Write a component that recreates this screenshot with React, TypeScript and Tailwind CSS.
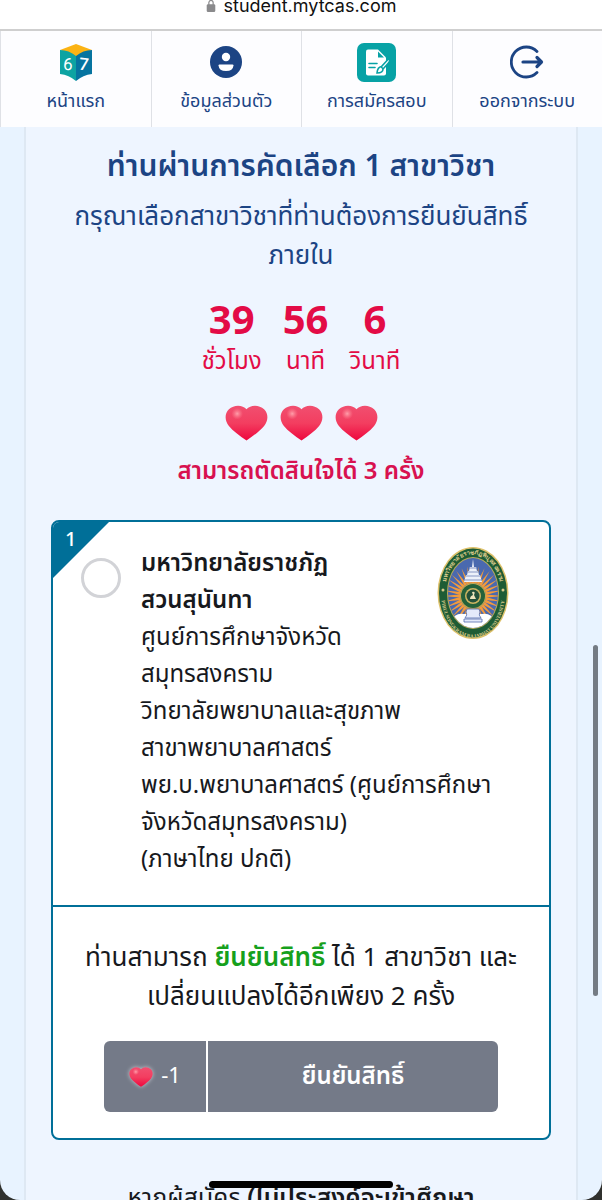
import React from 'react';

const FONT = "font-['Noto_Sans_Thai','Noto_Sans','Liberation_Sans',sans-serif]";

interface NavItem {
  label: string;
  href: string;
  icon: React.ReactNode;
}

const BookIcon = () => (
  <svg viewBox="0 0 34 38" className="w-[34px] h-[38px]" aria-hidden="true">
    <path d="M1 7 L17 1 L33 7 L17 14 Z" fill="#fbb314" />
    <path d="M1 7 Q10 7 17 13 V38 Q10 32 1 31 Z" fill="#0da3a2" />
    <path d="M33 7 Q24 7 17 13 V38 Q24 32 33 31 Z" fill="#0674a0" />
    <text x="9" y="27" textAnchor="middle" fontSize="17" fill="#fff" fontFamily="Roboto" transform="rotate(4 9 21)">6</text>
    <text x="25" y="27" textAnchor="middle" fontSize="17" fill="#fff" fontFamily="Roboto" fontWeight="500" transform="rotate(6 25 21)">7</text>
  </svg>
);

const ProfileIcon = () => (
  <svg viewBox="0 0 34 34" className="w-[34px] h-[34px]" aria-hidden="true">
    <circle cx="17" cy="17" r="16" fill="#1c4484" />
    <circle cx="17" cy="12" r="4.2" fill="#fff" />
    <path d="M9.5 20.5 Q9.5 19.5 10.5 19.5 H23.5 Q24.5 19.5 24.5 20.5 Q24 26 17 26 Q10 26 9.5 20.5 Z" fill="#fff" />
  </svg>
);

const ApplyIcon = () => (
  <svg viewBox="0 0 39 39" className="w-[39px] h-[39px]" aria-hidden="true">
    <rect width="39" height="39" rx="7" fill="#07a2a5" />
    <path d="M11 6.5 H21 L29 14.5 V30.5 Q29 32.5 27 32.5 H11 Q9 32.5 9 30.5 V8.5 Q9 6.5 11 6.5 Z" fill="#fff" />
    <path d="M21 8.5 V14.5 H27" fill="#07a2a5" />
    <path d="M12 20.5 H20 M12 24.5 H18" stroke="#07a2a5" strokeWidth="1.6" strokeLinecap="round" />
    <path d="M32.5 16 Q33.5 18 31 20.5 L26 26 Q26 30 20 30 Q20.5 24 24.5 23.5 L30 17.5 Q31.5 16 32.5 16 Z" fill="#fff" stroke="#07a2a5" strokeWidth="1.6" />
    <path d="M24 23.8 L26 25.8" stroke="#07a2a5" strokeWidth="1.4" />
  </svg>
);

const LogoutIcon = () => (
  <svg viewBox="0 0 34 34" className="w-[34px] h-[34px]" fill="none" stroke="#1c4484" strokeWidth="2.8" strokeLinecap="round" strokeLinejoin="round" aria-hidden="true">
    <path d="M27 6.5 A15 15 0 1 0 27 27.5" />
    <path d="M13 17 H31 M27 12.5 L31.5 17 L27 21.5" strokeWidth="3.2" />
  </svg>
);

const Heart = ({ className }: { className: string }) => (
  <svg viewBox="0 0 44 36" className={className} aria-hidden="true">
    <defs>
      <linearGradient id="heartFill" x1="0" y1="0" x2="0" y2="1">
        <stop offset="0" stopColor="#f14f70" />
        <stop offset="0.5" stopColor="#f33e60" />
        <stop offset="1" stopColor="#ee063d" />
      </linearGradient>
      <radialGradient id="heartShine">
        <stop offset="0" stopColor="#ff9fab" />
        <stop offset="1" stopColor="#ff7e8f" stopOpacity="0" />
      </radialGradient>
    </defs>
    <path d="M22 4 C18 -1 9 -1 4 4 C-1 9 0 16 4 21 C8 26 15 31 22 36 C29 31 36 26 40 21 C44 16 45 9 40 4 C35 -1 26 -1 22 4 Z" fill="url(#heartFill)" />
    <circle cx="12.5" cy="8.5" r="6" fill="url(#heartShine)" />
  </svg>
);

const RAYS = Array.from({ length: 32 }, (_, i) => i * 11.25);

const UniversitySeal = () => (
  <svg viewBox="0 0 72 94" className="w-[72px] h-[94px] shrink-0" role="img" aria-label="ตรามหาวิทยาลัย">
    <defs>
      <path id="sealTop" d="M8 52 C6 -6 66 -6 64 52" />
      <path id="sealBottom" d="M4 46 C5 107 67 107 68 46" />
      <clipPath id="sealInner">
        <ellipse cx="36" cy="47" rx="25" ry="35" />
      </clipPath>
    </defs>
    <ellipse cx="36" cy="47" rx="35.5" ry="46" fill="#ddc16a" />
    <ellipse cx="36" cy="47" rx="34" ry="44.5" fill="#1e5c35" />
    <ellipse cx="36" cy="47" rx="26" ry="36" fill="#b9ab5c" />
    <ellipse cx="36" cy="47" rx="25" ry="35" fill="#4a69af" />
    <g clipPath="url(#sealInner)">
      {RAYS.map((angle) => (
        <path key={angle} d="M34.5 37 L36 20 L37.5 37 Z" fill="#f29a3c" transform={`rotate(${angle} 36 50)`} />
      ))}
      <path d="M10 78 Q18 66 27 68 H45 Q54 66 62 78 V84 H10 Z" fill="#fff" />
    </g>
    <path d="M36 13 L37 21 H39 L40 25 H41 L42 29 H43 L45 36 H27 L29 29 H30 L31 25 H32 L33 21 H35 Z" fill="#edf1fa" />
    <path d="M32 22 H40 M31 26 H41 M29 30 H43 M27 34 H45" stroke="#8796c4" strokeWidth="1" />
    <circle cx="36" cy="50" r="13" fill="#c9ad4c" />
    <circle cx="36" cy="50" r="12" fill="#24613b" />
    <circle cx="36" cy="50" r="8" fill="#ccb562" />
    <circle cx="36" cy="50" r="6.5" fill="#24513a" />
    <path d="M35 46 Q39 45 37 49 L39 53 H33 Q33 50 36 49 Z" fill="#eee4bd" />
    <path d="M30 63 H42 L43 66 Q41 69 44 72 H28 Q31 69 29 66 Z M27 73 H45 V76 H27 Z" fill="#e4eafa" stroke="#526bac" strokeWidth="0.8" />
    <g fill="#d8c98a" fontFamily="Liberation Serif, serif" fontWeight="700">
      <text textAnchor="middle" fontSize="6">
        <textPath href="#sealTop" startOffset="50%">มหาวิทยาลัยราชภัฏพิบูลสงคราม</textPath>
      </text>
      <text textAnchor="middle" fontSize="5">
        <textPath href="#sealBottom" startOffset="50%">PIBULSONGKRAM RAJABHAT UNIVERSITY</textPath>
      </text>
      <circle cx="6" cy="44" r="1.5" />
      <circle cx="66" cy="44" r="1.5" />
    </g>
  </svg>
);

const navItems: NavItem[] = [
  { label: 'หน้าแรก', href: '#home', icon: <BookIcon /> },
  { label: 'ข้อมูลส่วนตัว', href: '#profile', icon: <ProfileIcon /> },
  { label: 'การสมัครสอบ', href: '#apply', icon: <ApplyIcon /> },
  { label: 'ออกจากระบบ', href: '#logout', icon: <LogoutIcon /> },
];

const countdown = [
  { value: '39', unit: 'ชั่วโมง' },
  { value: '56', unit: 'นาที' },
  { value: '6', unit: 'วินาที' },
];

const programLines = [
  'ศูนย์การศึกษาจังหวัด',
  'สมุทรสงคราม',
  'วิทยาลัยพยาบาลและสุขภาพ',
  'สาขาพยาบาลศาสตร์',
  'พย.บ.พยาบาลศาสตร์ (ศูนย์การศึกษา',
  'จังหวัดสมุทรสงคราม)',
  '(ภาษาไทย ปกติ)',
];

const Header = () => (
  <header className="shrink-0">
    <div className="h-[31px] bg-white border-b-2 border-[#cfcfcf] flex items-start justify-center gap-2 overflow-hidden">
      <svg viewBox="0 0 10 14" className="w-[10px] h-3" aria-hidden="true">
        <path d="M2.5 6 V3 a2.5 2.5 0 0 1 5 0 V6" fill="none" stroke="#8a8a8c" strokeWidth="1.4" />
        <rect y="5" width="10" height="9" rx="1.5" fill="#8a8a8c" />
      </svg>
      <span className="font-['Inter',sans-serif] text-lg leading-3 text-[#111]">student.mytcas.com</span>
    </div>
    <nav className="grid grid-cols-4 h-24 bg-[#fdfdff]">
      {navItems.map((item) => (
        <a
          key={item.href}
          href={item.href}
          className="flex flex-col items-center border-l border-[#dfe1e6] pt-[11px] text-[#1c4484]"
        >
          <span className="h-10 flex items-center">{item.icon}</span>
          <span className="mt-1 text-lg leading-8 whitespace-nowrap">{item.label}</span>
        </a>
      ))}
    </nav>
  </header>
);

const ProgramCard = () => (
  <section className="mt-7 rounded-lg border-2 border-[#006f98] bg-white overflow-hidden text-left text-[#17191d]">
    <div className="relative flex pt-6 pb-[26px] pl-7 pr-10">
      <div className="absolute top-0 left-0 w-14 h-14 bg-[#006f98] [clip-path:polygon(0_0,100%_0,0_100%)]">
        <span className="block pl-3 pt-1 text-xl leading-7 font-medium text-white">1</span>
      </div>
      <input
        id="program-1"
        type="radio"
        name="program"
        className="relative appearance-none mt-3 w-10 h-10 shrink-0 rounded-full border-3 border-[#d2d3d7] bg-white"
      />
      <label htmlFor="program-1" className="ml-5 flex-1 min-w-0 text-2xl leading-[37px] whitespace-nowrap">
        <strong className="block font-semibold">มหาวิทยาลัยราชภัฏ</strong>
        <strong className="block font-semibold">สวนสุนันทา</strong>
        {programLines.map((line) => (
          <span key={line} className="block">{line}</span>
        ))}
      </label>
      <UniversitySeal />
    </div>

    <div className="border-t-2 border-[#006f98] px-4 pt-8 pb-[26px] text-center">
      <p className="text-[26px] leading-[39px] whitespace-nowrap">
        ท่านสามารถ <strong className="font-semibold text-[#16a01c]">ยืนยันสิทธิ์</strong> ได้ 1 สาขาวิชา และ
        <br />
        เปลี่ยนแปลงได้อีกเพียง 2 ครั้ง
      </p>
      <div className="mt-6 px-[35px]">
        <button type="button" className="w-full h-[71px] flex items-stretch rounded-md overflow-hidden bg-[#747a88] text-white">
          <span className="w-[104px] border-r-2 border-white flex items-center justify-center gap-2 text-[22px]">
            <Heart className="w-6 h-5 drop-shadow-[0_0_2px_#ffffff99]" />
            -1
          </span>
          <span className="flex-1 flex items-center justify-center text-2xl font-semibold">ยืนยันสิทธิ์</span>
        </button>
      </div>
    </div>
  </section>
);

export default function App() {
  return (
    <div className="h-screen bg-[#30312e]">
      <div className={`relative h-full flex flex-col overflow-hidden rounded-b-[20px] bg-[#e8f3ff] ${FONT}`}>
        <Header />
        <main className="flex-1 mx-6 px-[25px] pt-5 border-x-2 border-[#dee8f3] bg-[#eef5ff] text-center">
          <h1 className="text-[30px] leading-10 font-semibold text-[#1c4484] whitespace-nowrap">
            ท่านผ่านการคัดเลือก 1 สาขาวิชา
          </h1>
          <p className="mt-[11px] text-[26px] leading-[39px] text-[#1c4484] whitespace-nowrap">
            กรุณาเลือกสาขาวิชาที่ท่านต้องการยืนยันสิทธิ์
            <br />
            ภายใน
          </p>
          <div className="mt-[26px] flex justify-center gap-[21px] text-[#e30b46]">
            {countdown.map((part) => (
              <div key={part.unit}>
                <div className="text-[40px] leading-10 font-bold">{part.value}</div>
                <div className="text-2xl leading-10 whitespace-nowrap">{part.unit}</div>
              </div>
            ))}
          </div>
          <div className="mt-[23px] flex justify-center gap-3">
            <Heart className="w-[43px] h-9" />
            <Heart className="w-[43px] h-9" />
            <Heart className="w-[43px] h-9" />
          </div>
          <p className="mt-[11px] text-2xl leading-10 font-semibold text-[#d81150] whitespace-nowrap">
            สามารถตัดสินใจได้ 3 ครั้ง
          </p>
          <ProgramCard />
          <p className="mt-10 text-[25px] leading-9 text-[#17191d] whitespace-nowrap">
            หากผู้สมัคร <strong className="font-semibold">(ไม่ประสงค์จะเข้าศึกษา</strong>
          </p>
        </main>
        <div className="absolute right-1 top-[645px] w-[5px] h-[351px] rounded-full bg-[#747b84]" />
        <div className="absolute bottom-3 left-1/2 -translate-x-1/2 w-[184px] h-[7px] rounded-full bg-black" />
      </div>
    </div>
  );
}
